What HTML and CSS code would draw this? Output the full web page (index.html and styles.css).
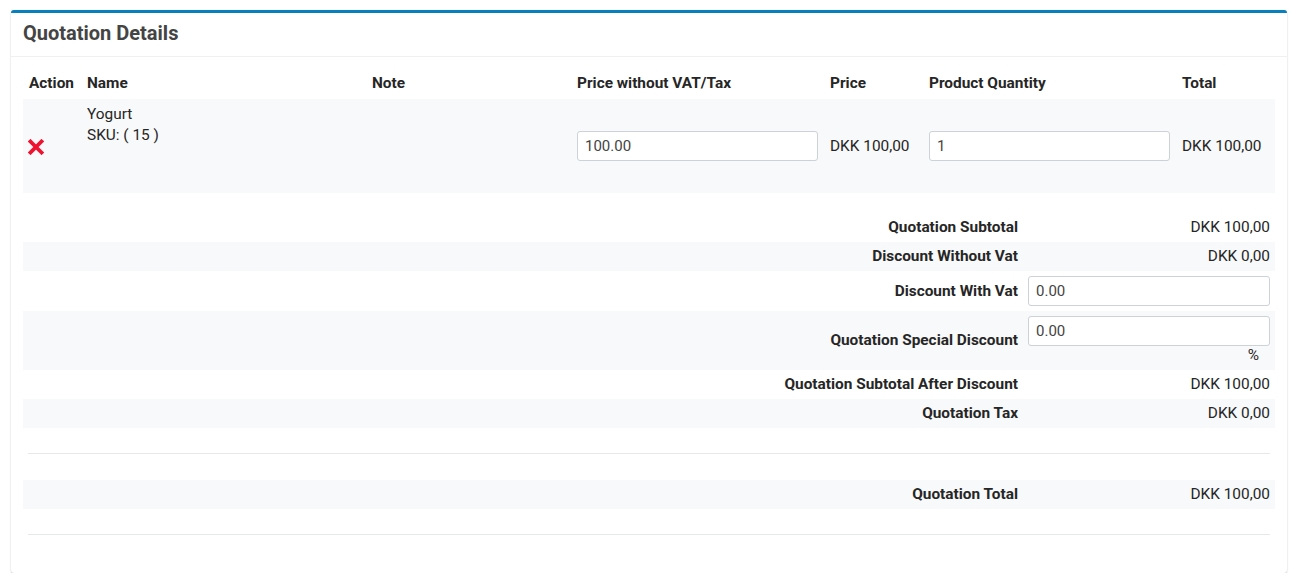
FILE: index.html
```html
<!DOCTYPE html>
<html lang="en">
<head>
<meta charset="utf-8">
<title>Quotation Details</title>
<link rel="stylesheet" href="styles.css">
</head>
<body>
<div class="card">
  <div class="card-header">
    <h3 class="card-title">Quotation Details</h3>
  </div>
  <div class="card-body">
    <table class="items">
      <colgroup>
        <col class="c-action"><col class="c-name"><col class="c-note"><col class="c-pwv"><col class="c-price"><col class="c-qty"><col class="c-total">
      </colgroup>
      <thead>
        <tr>
          <th>Action</th>
          <th>Name</th>
          <th>Note</th>
          <th>Price without VAT/Tax</th>
          <th>Price</th>
          <th>Product Quantity</th>
          <th>Total</th>
        </tr>
      </thead>
      <tbody>
        <tr class="item-row">
          <td class="mid">
            <svg class="del" width="16" height="16" viewBox="0 0 16 16" aria-hidden="true">
              <path d="M2.5 2.5 L13.5 13.5 M13.5 2.5 L2.5 13.5" stroke="#ee1430" stroke-width="3.8" stroke-linecap="square"/>
            </svg>
          </td>
          <td class="top">Yogurt<br>SKU: ( 15 )</td>
          <td class="mid"></td>
          <td class="mid"><input class="field" type="text" value="100.00"></td>
          <td class="mid">DKK 100,00</td>
          <td class="mid"><input class="field" type="text" value="1"></td>
          <td class="mid">DKK 100,00</td>
        </tr>
      </tbody>
    </table>

    <table class="summary">
      <colgroup><col class="s-label"><col class="s-value"></colgroup>
      <tbody>
        <tr>
          <th>Quotation Subtotal</th>
          <td>DKK 100,00</td>
        </tr>
        <tr class="striped">
          <th>Discount Without Vat</th>
          <td>DKK 0,00</td>
        </tr>
        <tr class="input-row">
          <th>Discount With Vat</th>
          <td><input class="field" type="text" value="0.00"></td>
        </tr>
        <tr class="striped input-row">
          <th>Quotation Special Discount</th>
          <td><input class="field" type="text" value="0.00"><div class="pct">%</div></td>
        </tr>
        <tr>
          <th>Quotation Subtotal After Discount</th>
          <td>DKK 100,00</td>
        </tr>
        <tr class="striped">
          <th>Quotation Tax</th>
          <td>DKK 0,00</td>
        </tr>
        <tr class="rule-row">
          <td colspan="2"><hr class="rule"></td>
        </tr>
        <tr class="striped">
          <th>Quotation Total</th>
          <td>DKK 100,00</td>
        </tr>
        <tr class="rule-row">
          <td colspan="2"><hr class="rule"></td>
        </tr>
      </tbody>
    </table>
  </div>
</div>
</body>
</html>
```

FILE: styles.css
```css
* { box-sizing: border-box; }

body {
  margin: 0;
  background: #ffffff;
  font-family: Roboto, "Liberation Sans", Arial, sans-serif;
  font-size: 15.4px;
  line-height: 21px;
  color: #262626;
}

.card {
  margin: 10px 0 0 11px;
  width: 1276px;
  background: #fff;
  border-top: 3px solid #0a7fbd;
  border-radius: 3px;
  box-shadow: 0 0 1px rgba(0,0,0,.2), 0 1px 2px rgba(0,0,0,.15);
}

.card-header {
  padding: 9px 12px 11px;
  border-bottom: 1px solid #f0f0f0;
}

.card-title {
  margin: 0;
  font-size: 20px;
  line-height: 23px;
  font-weight: 700;
  color: #444;
}

.card-body {
  padding: 11px 12px 12px;
}

table {
  border-collapse: collapse;
  width: 1252px;
  table-layout: fixed;
}

.c-action { width: 58px; }
.c-name { width: 285px; }
.c-note { width: 205px; }
.c-pwv { width: 253px; }
.c-price { width: 99px; }
.c-qty { width: 253px; }
.c-total { width: 99px; }

.items th {
  text-align: left;
  font-weight: 700;
  padding: 5px 6px;
  color: #262626;
}

.items td {
  padding: 5px 6px;
}

.item-row {
  height: 94px;
  background: #f8f9fa;
}

.top { vertical-align: top; }
.mid { vertical-align: middle; }

.del {
  display: block;
  margin-left: -1px;
  margin-top: 2px;
}

.field {
  display: block;
  width: 100%;
  height: 30px;
  padding: 0 7px;
  border: 1px solid #cdd2d8;
  border-radius: 3px;
  font-family: Roboto, "Liberation Sans", Arial, sans-serif;
  font-size: 15px;
  color: #444;
  background: #fff;
}

.summary {
  margin-top: 20px;
}

.s-label { width: 1000px; }
.s-value { width: 252px; }

.summary th {
  text-align: right;
  font-weight: 700;
  padding: 4px 5px;
  color: #262626;
  vertical-align: middle;
}

.summary td {
  text-align: right;
  padding: 4px 5px;
  vertical-align: middle;
}

.summary .input-row td {
  padding: 5px 5px;
  text-align: left;
}

.striped { background: #f8f9fa; }

.pct {
  text-align: right;
  padding-right: 11px;
  line-height: 19px;
}

.summary .rule-row td {
  padding: 4px 5px;
}

.rule {
  margin: 21px 0 22px;
  border: 0;
  border-top: 1px solid #e6e8ea;
  height: 0;
}
```
